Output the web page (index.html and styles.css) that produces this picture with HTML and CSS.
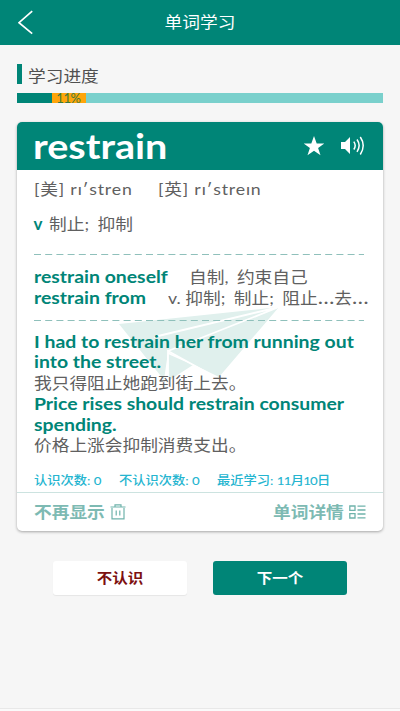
FILE: index.html
```html
<!DOCTYPE html>
<html lang="zh-CN">
<head>
<meta charset="utf-8">
<title>单词学习</title>
<link rel="stylesheet" href="styles.css">
</head>
<body>
<header class="topbar">
  <svg class="back" viewBox="0 0 16 26"><path d="M14.2 1.2 1 12.7 14.2 23.6"/></svg>
  <h1><span class="fit">单词学习</span></h1>
</header>
<main>
  <section class="progress">
    <h2><span class="fit">学习进度</span></h2>
    <div class="track"><div class="done"></div><div class="percent">11%</div></div>
  </section>
  <article class="card">
    <div class="word">
      <strong><span class="fit">restrain</span></strong>
      <svg class="star" viewBox="0 0 22 20"><path d="M11 0l2.7 7.4H21.3L15.1 11.9 17.5 19.2 11 14.8 4.5 19.2 6.9 11.9.7 7.4H8.3z"/></svg>
      <svg class="sound" viewBox="0 0 26 20"><path class="solid" d="M1 6h4l5-5v17l-5-5H1z"/><path d="M13.8 5.6Q16.6 9.5 13.8 13.5M17 3.5Q21.3 9.5 17 15.8M20.3 1Q26.1 9.5 20.3 18.5"/></svg>
    </div>
    <div class="body">
      <svg class="plane" viewBox="0 0 162 76"><path d="M0 18 160 1 100 71 49 46 45 74Z"/><path d="M49 48V75L74 59Z"/><path class="fold" d="M160 1 35 31M160 1 49 45M49 76V45L98 72"/></svg>
      <div class="sounds"><span class="fit us">[美] rɪ′stren</span><span class="fit">[英] rɪ′streɪn</span></div>
      <div class="meaning"><b>v</b><span class="fit spaced">制止; 抑制</span></div>
      <svg class="dash" viewBox="0 0 330 1"><path d="M0 .5H330"/></svg>
      <div class="phrases">
        <div class="line"><b class="fit one">restrain oneself</b><span class="fit spaced">自制, 约束自己</span></div>
        <div class="line"><b class="fit two">restrain from</b><span class="fit">v. <span class="spaced">抑制; 制止; 阻止<i>…</i>去<i>…</i></span></span></div>
      </div>
      <svg class="dash" viewBox="0 0 330 1"><path d="M0 .5H330"/></svg>
      <div class="examples">
        <div class="line"><b class="fit">I had to restrain her from running out</b></div>
        <div class="line"><b class="fit">into the street.</b></div>
        <div class="line"><span class="fit">我只得阻止她跑到街上去。</span></div>
        <div class="line"><b class="fit">Price rises should restrain consumer</b></div>
        <div class="line"><b class="fit">spending.</b></div>
        <div class="line"><span class="fit">价格上涨会抑制消费支出。</span></div>
      </div>
      <div class="stats"><span class="fit known">认识次数: 0</span><span class="fit unknown">不认识次数: 0</span><span class="fit">最近学习: <span class="date">11月10日</span></span></div>
    </div>
    <footer class="actions">
      <div class="hide"><span class="fit">不再显示</span>
        <svg class="trash" viewBox="0 0 16 16"><path d="M.5 3H15.5M5 3V.8H11V3M2 4V14.8H14V4M6.2 6.5V11.5M9.8 6.5V11.5"/></svg></div>
      <div class="detail"><span class="fit">单词详情</span>
        <svg class="list" viewBox="0 0 17 14"><path d="M.8 1H6V5.4H.8ZM.8 8.6H6V13H.8ZM8.5 1.2H16.5M8.5 5H16.5M8.5 9H16.5M8.5 12.8H16.5"/></svg></div>
    </footer>
  </article>
  <div class="buttons">
    <button class="no"><span class="fit">不认识</span></button>
    <button class="next"><span class="fit">下一个</span></button>
  </div>
</main>
<div class="bottom"></div>
</body>
</html>
```
FILE: styles.css
```css
* { box-sizing: border-box; }
body {
  margin: 0;
  height: 711px;
  display: flex;
  flex-direction: column;
  background: #f6f6f6;
  color: #606060;
  font: 16px/20.7px Lato, "Noto Sans CJK SC", sans-serif;
  overflow: hidden;
}
svg { display: block; flex: none; fill: none; }
h1, h2 { margin: 0; font-weight: 400; }
b { color: #008577; font-size: 17px; font-weight: 700; }
.fit {
  display: inline-block;
  white-space: nowrap;
  transform: scaleX(1.106);
  transform-origin: left center;
}
b.fit { transform: scaleX(1.142); }
.spaced { word-spacing: 3.6px; }
.spaced i { font-style: normal; font-size: 20px; line-height: 16px; }
.topbar {
  height: 45px;
  flex: none;
  display: grid;
  grid-template-columns: 40px 1fr 40px;
  align-items: center;
  background: #008577;
  color: #fff;
}
.back { width: 16px; height: 26px; margin-left: 18px; stroke: #fff; stroke-width: 1.7; }
h1 { font-size: 16px; text-align: center; }
h1 .fit, button .fit { transform-origin: center; }
main { flex: 1; padding: 19px 17px 0; }
.progress h2 {
  height: 20px;
  padding: 2px 0 0 6px;
  border-left: 5px solid #008577;
  font-size: 16px;
  line-height: 20px;
  color: #505050;
}
.track { display: flex; height: 10px; margin-top: 9px; background: #7ad0cc; }
.done { width: 34.5px; background: #008577; }
.percent { width: 34px; background: #ffa50a; color: #3c7a3c; font-size: 13px; line-height: 11px; letter-spacing: -.4px; text-align: center; }
.card {
  height: 409.5px;
  margin-top: 18.5px;
  display: flex;
  flex-direction: column;
  background: #fff;
  border-radius: 5px;
  box-shadow: 0 1px 3px #0005;
  overflow: hidden;
}
.word {
  height: 48px;
  flex: none;
  display: flex;
  align-items: center;
  padding: 0 17px 0 16px;
  background: #008577;
  color: #fff;
}
.word strong { flex: 1; font-size: 35px; line-height: 44px; padding-bottom: 2px; }
.word .fit { transform: scaleX(1.13); }
.star { width: 22px; height: 20px; margin-right: 15px; }
.star path { fill: #fff; }
.sound { width: 26px; height: 20px; stroke: #fff; stroke-width: 1.5; }
.sound .solid { fill: #fff; stroke: none; }
.body { position: relative; z-index: 0; flex: 1; padding: 9px 17px 0 16.5px; }
.plane { position: absolute; z-index: -1; left: 102px; top: 136px; width: 162px; height: 76px; }
.plane path { fill: #e0f0ed; }
.plane .fold { fill: none; stroke: #fff; stroke-width: 1.8; }
.sounds, .meaning, .line, .stats { display: flex; white-space: nowrap; }
.line { height: 20.7px; }
.sounds .fit { letter-spacing: .75px; }
.us { width: 124px; }
.meaning { margin-top: 14.5px; gap: 7px; }
.dash { width: 330px; height: 1px; stroke: #8fc0bb; stroke-dasharray: 7 4.2; }
.meaning + .dash { margin-top: 20px; }
.phrases { padding: 12px 0 11px; }
.one { width: 155px; }
.two { width: 134px; }
.examples { padding-top: 11px; }
.stats { margin-top: 15px; font-size: 12px; font-weight: 500; color: #25b5d0; }
.date { letter-spacing: -.7px; }
.known { width: 85px; }
.unknown { width: 98px; }
.actions {
  height: 39px;
  flex: none;
  display: flex;
  justify-content: space-between;
  padding: 0 17px;
  border-top: 1px solid #cce3e0;
  color: #7dbab3;
  font-weight: 700;
}
.hide, .detail { display: flex; align-items: center; }
.hide .fit, .detail .fit { width: 76px; }
.trash { width: 16px; height: 16px; stroke: #6fb3ab; stroke-width: 1.2; }
.list { width: 17px; height: 14px; stroke: #6fb3ab; stroke-width: 1.3; }
.buttons { display: flex; justify-content: center; gap: 26px; margin-top: 29.5px; }
button {
  width: 134px;
  height: 34px;
  padding: 0;
  border: 0;
  border-radius: 3px;
  font: 700 14px/20px Lato, "Noto Sans CJK SC", sans-serif;
}
.no { background: #fff; color: #7d1010; box-shadow: 0 1px 1px #0001; }
.next { background: #008577; color: #fff; }
.bottom { height: 3px; border-top: 1px solid #e8e8e8; background: #fafafa; }
```
